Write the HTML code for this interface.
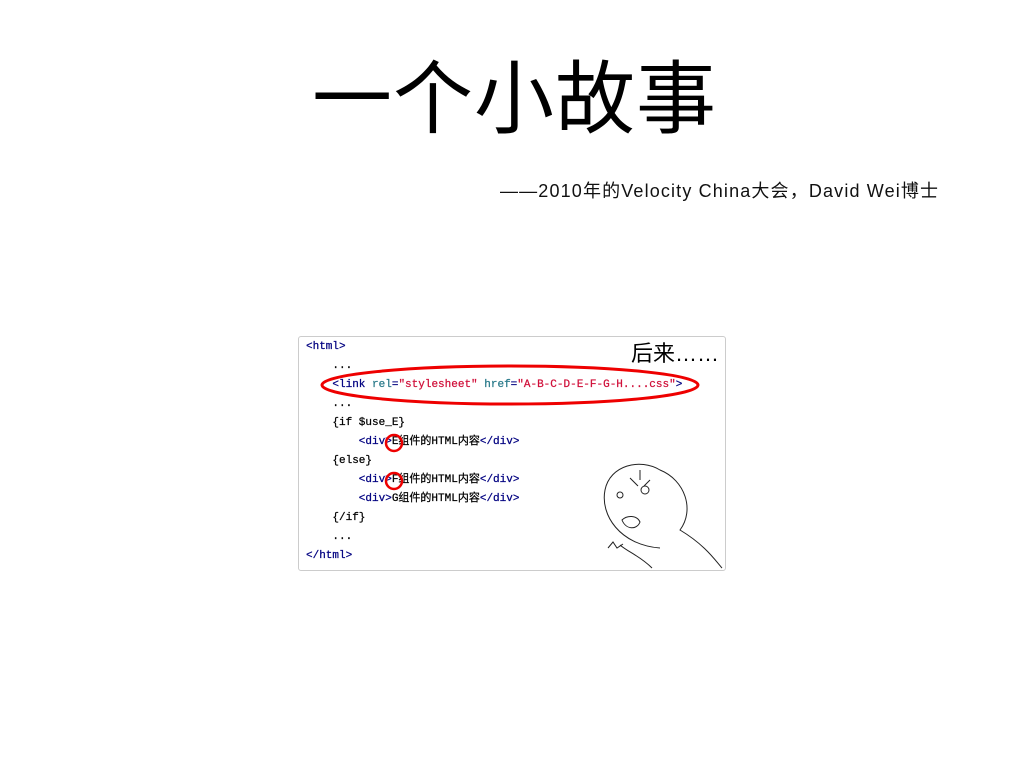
<!DOCTYPE html>
<html><head><meta charset="utf-8"><style>
body{margin:0;width:1024px;height:768px;background:#fff;position:relative;overflow:hidden;font-family:"Liberation Sans","Noto Sans CJK SC",sans-serif}
.t{position:absolute;left:312px;top:50px;font-size:80px;line-height:100px;letter-spacing:1px;color:#000}
.s{position:absolute;left:500px;top:179px;font-size:18px;line-height:24px;letter-spacing:1.15px;color:#111;white-space:nowrap}
.box{position:absolute;left:298px;top:336px;width:426px;height:233px;border:1px solid #ccc;border-radius:3px}
.c{position:absolute;left:306px;font-family:"Liberation Mono","Noto Sans CJK SC",monospace;font-size:11px;line-height:19px;color:#000080;white-space:pre;-webkit-text-stroke:0.25px}
.k{color:#000}.a{color:#2a7a8a}.v{color:#d0103a}
</style></head><body>
<div class="t">一个小故事</div>
<div class="s">——2010年的Velocity China大会，David Wei博士</div>
<div class="box"></div>
<div class="c" style="top:338px">&lt;html&gt;
<span class="k">    ...</span>
    &lt;link <span class="a">rel</span>=<span class="v">"stylesheet"</span> <span class="a">href</span>=<span class="v">"A-B-C-D-E-F-G-H....css"</span>&gt;
<span class="k">    ...
    {if $use_E}</span>
        &lt;div&gt;<span class="k">E组件的HTML内容</span>&lt;/div&gt;
<span class="k">    {else}</span>
        &lt;div&gt;<span class="k">F组件的HTML内容</span>&lt;/div&gt;
        &lt;div&gt;<span class="k">G组件的HTML内容</span>&lt;/div&gt;
<span class="k">    {/if}
    ...</span>
&lt;/html&gt;</div>
<div style="position:absolute;left:631px;top:340px;font-size:22px;line-height:28px">后来……</div>
<svg style="position:absolute;left:0;top:0" width="1024" height="768">
<ellipse cx="510" cy="385" rx="188" ry="19" fill="none" stroke="#e00" stroke-width="3"/>
<circle cx="394" cy="443" r="8" fill="none" stroke="#e00" stroke-width="2.5"/>
<circle cx="394" cy="481" r="8" fill="none" stroke="#e00" stroke-width="2.5"/>
<g fill="none" stroke="#222" stroke-width="1">
<path d="M660 548 C620 545 600 515 605 490 C610 465 640 458 660 470 C685 480 695 510 680 530 C705 545 715 560 722 568"/>
<path d="M620 545 C628 552 640 556 652 568"/>
<path d="M608 548 l5 -6 l4 6 l6 -4"/>
<circle cx="620" cy="495" r="3"/><circle cx="645" cy="490" r="4"/>
<path d="M622 520 c5 -5 15 -5 18 2 c-3 8 -14 8 -18 -2z"/>
<path d="M630 478 l8 8 M650 480 l-6 6 M640 470 l0 10"/>
</g>
</svg>
</body></html>
